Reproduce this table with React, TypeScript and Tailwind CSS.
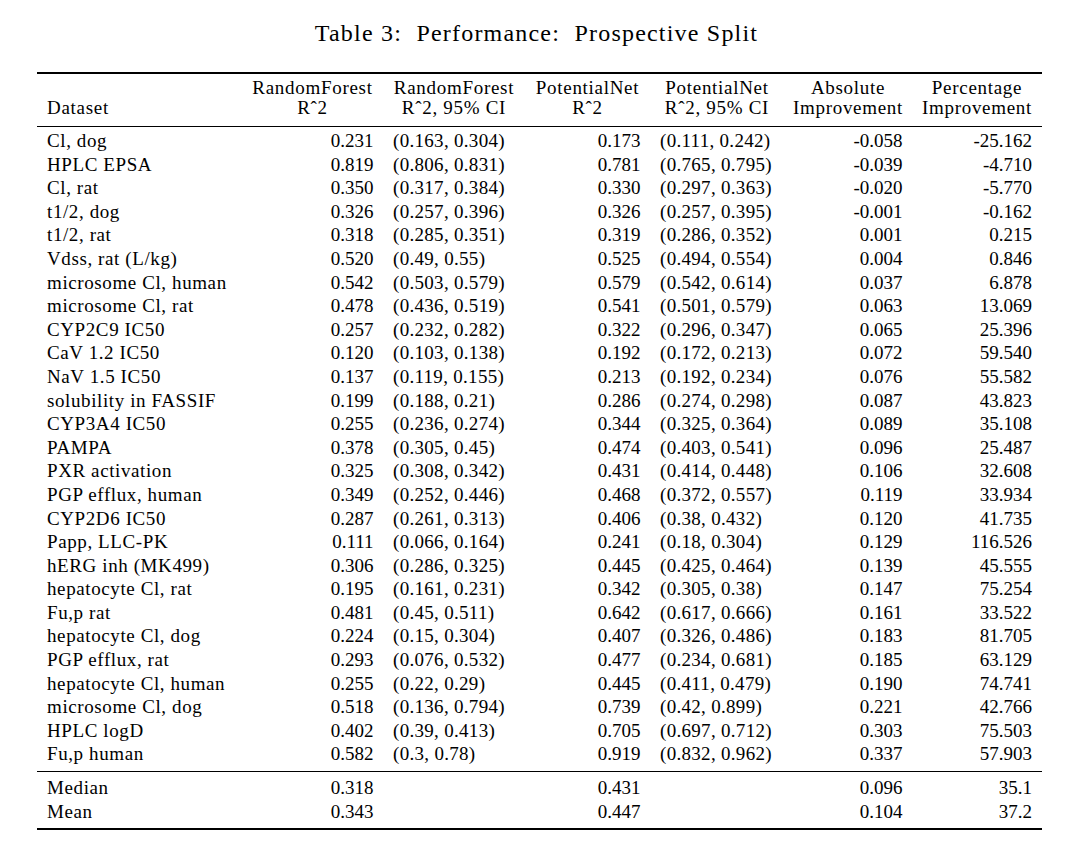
import React from "react";

type Row = [string, string, string, string, string, string, string];

const rows: Row[] = [
  ["Cl, dog", "0.231", "(0.163, 0.304)", "0.173", "(0.111, 0.242)", "-0.058", "-25.162"],
  ["HPLC EPSA", "0.819", "(0.806, 0.831)", "0.781", "(0.765, 0.795)", "-0.039", "-4.710"],
  ["Cl, rat", "0.350", "(0.317, 0.384)", "0.330", "(0.297, 0.363)", "-0.020", "-5.770"],
  ["t1/2, dog", "0.326", "(0.257, 0.396)", "0.326", "(0.257, 0.395)", "-0.001", "-0.162"],
  ["t1/2, rat", "0.318", "(0.285, 0.351)", "0.319", "(0.286, 0.352)", "0.001", "0.215"],
  ["Vdss, rat (L/kg)", "0.520", "(0.49, 0.55)", "0.525", "(0.494, 0.554)", "0.004", "0.846"],
  ["microsome Cl, human", "0.542", "(0.503, 0.579)", "0.579", "(0.542, 0.614)", "0.037", "6.878"],
  ["microsome Cl, rat", "0.478", "(0.436, 0.519)", "0.541", "(0.501, 0.579)", "0.063", "13.069"],
  ["CYP2C9 IC50", "0.257", "(0.232, 0.282)", "0.322", "(0.296, 0.347)", "0.065", "25.396"],
  ["CaV 1.2 IC50", "0.120", "(0.103, 0.138)", "0.192", "(0.172, 0.213)", "0.072", "59.540"],
  ["NaV 1.5 IC50", "0.137", "(0.119, 0.155)", "0.213", "(0.192, 0.234)", "0.076", "55.582"],
  ["solubility in FASSIF", "0.199", "(0.188, 0.21)", "0.286", "(0.274, 0.298)", "0.087", "43.823"],
  ["CYP3A4 IC50", "0.255", "(0.236, 0.274)", "0.344", "(0.325, 0.364)", "0.089", "35.108"],
  ["PAMPA", "0.378", "(0.305, 0.45)", "0.474", "(0.403, 0.541)", "0.096", "25.487"],
  ["PXR activation", "0.325", "(0.308, 0.342)", "0.431", "(0.414, 0.448)", "0.106", "32.608"],
  ["PGP efflux, human", "0.349", "(0.252, 0.446)", "0.468", "(0.372, 0.557)", "0.119", "33.934"],
  ["CYP2D6 IC50", "0.287", "(0.261, 0.313)", "0.406", "(0.38, 0.432)", "0.120", "41.735"],
  ["Papp, LLC-PK", "0.111", "(0.066, 0.164)", "0.241", "(0.18, 0.304)", "0.129", "116.526"],
  ["hERG inh (MK499)", "0.306", "(0.286, 0.325)", "0.445", "(0.425, 0.464)", "0.139", "45.555"],
  ["hepatocyte Cl, rat", "0.195", "(0.161, 0.231)", "0.342", "(0.305, 0.38)", "0.147", "75.254"],
  ["Fu,p rat", "0.481", "(0.45, 0.511)", "0.642", "(0.617, 0.666)", "0.161", "33.522"],
  ["hepatocyte Cl, dog", "0.224", "(0.15, 0.304)", "0.407", "(0.326, 0.486)", "0.183", "81.705"],
  ["PGP efflux, rat", "0.293", "(0.076, 0.532)", "0.477", "(0.234, 0.681)", "0.185", "63.129"],
  ["hepatocyte Cl, human", "0.255", "(0.22, 0.29)", "0.445", "(0.411, 0.479)", "0.190", "74.741"],
  ["microsome Cl, dog", "0.518", "(0.136, 0.794)", "0.739", "(0.42, 0.899)", "0.221", "42.766"],
  ["HPLC logD", "0.402", "(0.39, 0.413)", "0.705", "(0.697, 0.712)", "0.303", "75.503"],
  ["Fu,p human", "0.582", "(0.3, 0.78)", "0.919", "(0.832, 0.962)", "0.337", "57.903"],
];

const footer: Row[] = [
  ["Median", "0.318", "", "0.431", "", "0.096", "35.1"],
  ["Mean", "0.343", "", "0.447", "", "0.104", "37.2"],
];

const grid =
  "grid grid-cols-[185px_122px_122px_106px_114px_109px_110px] gap-x-[19.5px] px-[10px]";

function DataRow({ r }: { r: Row }) {
  return (
    <div className={`${grid} h-[23.6px] leading-[23.6px]`}>
      <div className="text-left tracking-[0.6px] whitespace-nowrap">{r[0]}</div>
      <div className="text-right">{r[1]}</div>
      <div className="text-left tracking-[0.3px] whitespace-nowrap">{r[2]}</div>
      <div className="text-right">{r[3]}</div>
      <div className="text-left tracking-[0.3px] whitespace-nowrap">{r[4]}</div>
      <div className="text-right">{r[5]}</div>
      <div className="text-right">{r[6]}</div>
    </div>
  );
}

function Head({ a, b }: { a: string; b: string }) {
  return (
    <div className="flex flex-col items-center tracking-[0.7px] whitespace-nowrap">
      <div className="h-[20px]">{a}</div>
      <div className="h-[20px]">{b}</div>
    </div>
  );
}

export default function App() {
  return (
    <div className="w-[1080px] h-[845px] bg-white text-black font-[family-name:'Liberation_Serif','Times_New_Roman',serif] text-[19px]">
      <div className="h-[72px] pt-[18px] pr-[7px] text-center text-[24px] leading-[30px] tracking-[1.2px]">
        Table 3:&nbsp; Performance:&nbsp; Prospective Split
      </div>
      <div className="ml-[37px] w-[1005px] border-t-2 border-b-2 border-black">
        <div className={`${grid} pt-[4px] pb-[8px] leading-[20px] border-b border-black`}>
          <div className="flex flex-col tracking-[0.7px]">
            <div className="h-[20px]"></div>
            <div className="h-[20px]">Dataset</div>
          </div>
          <Head a="RandomForest" b="Rˆ2" />
          <Head a="RandomForest" b="Rˆ2, 95% CI" />
          <Head a="PotentialNet" b="Rˆ2" />
          <Head a="PotentialNet" b="Rˆ2, 95% CI" />
          <Head a="Absolute" b="Improvement" />
          <Head a="Percentage" b="Improvement" />
        </div>
        <div className="pt-[2px] pb-[5px] border-b border-black">
          {rows.map((r, i) => (
            <DataRow key={i} r={r} />
          ))}
        </div>
        <div className="pt-[4px] pb-[5px]">
          {footer.map((r, i) => (
            <DataRow key={i} r={r} />
          ))}
        </div>
      </div>
    </div>
  );
}
